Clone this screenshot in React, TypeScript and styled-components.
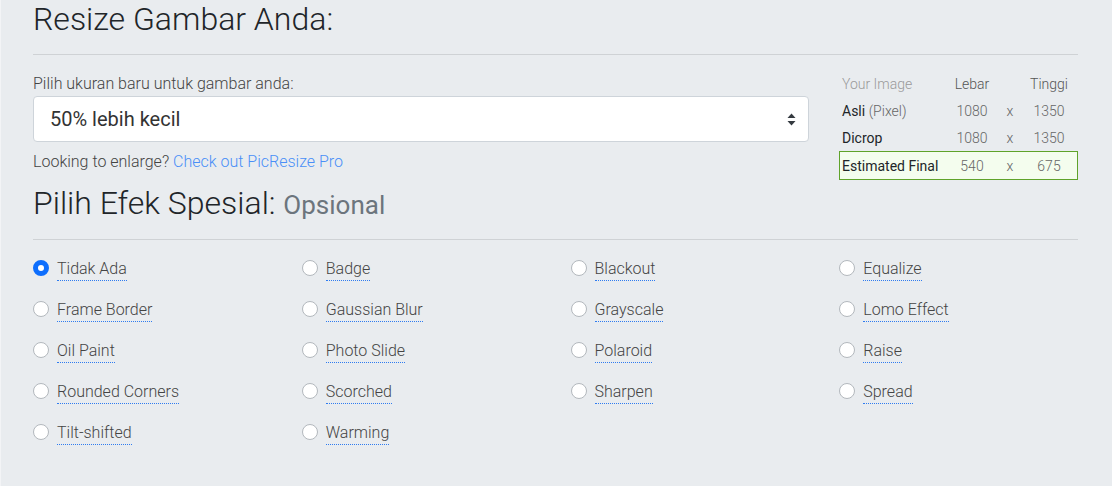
import React from 'react';
import styled, { createGlobalStyle } from 'styled-components';

const GlobalStyle = createGlobalStyle`
  html, body {
    margin: 0;
    padding: 0;
    background-color: #e9ecef;
  }
  body {
    font-family: Roboto, "Liberation Sans", Arial, sans-serif;
    color: #212529;
  }
`;

const Page = styled.div`
  min-height: 486px;
  border-left: 1px solid #f3f4f6;
  box-sizing: border-box;
  padding-left: 32px;
`;

const Container = styled.div`
  width: 1045px;
`;

const Title = styled.h1`
  margin: 0;
  font-size: 32px;
  font-weight: 300;
  line-height: 38px;
  color: #212529;
`;

const Divider = styled.hr`
  border: 0;
  border-top: 1px solid #cfd2d5;
  margin: 16px 0 19px;
`;

const Row = styled.div`
  display: grid;
  grid-template-columns: 776px 1fr;
  column-gap: 30px;
`;

const FieldLabel = styled.div`
  font-size: 16px;
  font-weight: 300;
  line-height: 19px;
  color: #444;
  margin-bottom: 3px;
`;

const SelectBox = styled.div`
  height: 46px;
  box-sizing: border-box;
  background: #fff;
  border: 1px solid #ced4da;
  border-radius: 4px;
  display: flex;
  align-items: center;
  justify-content: space-between;
  padding: 0 12px 0 16px;
  font-size: 20px;
  font-weight: 400;
  color: #333;
`;

const Hint = styled.div`
  margin-top: 10px;
  font-size: 16px;
  font-weight: 300;
  line-height: 19px;
  color: #444;

  a {
    color: #4a8ff7;
    text-decoration: none;
  }
`;

const SizeTable = styled.table`
  width: 100%;
  border-collapse: collapse;
  margin-top: -3px;
  font-size: 14px;
  font-weight: 400;

  th {
    font-weight: 300;
    color: #555;
    height: 26px;
    text-align: center;
    padding: 0;
  }
  th:first-child {
    color: #9a9a9a;
    text-align: left;
    padding-left: 3px;
  }
  td {
    height: 27px;
    text-align: center;
    color: #666;
    font-weight: 300;
    padding: 0;
  }
  td:first-child {
    text-align: left;
    padding-left: 3px;
    color: #212529;
    font-weight: 400;
  }
`;

const Muted = styled.span`
  color: #666;
  font-weight: 300;
`;

const FinalRow = styled.tr`
  background: #f4fdee;
  outline: 1px solid #5fa32a;
  outline-offset: -1px;

  td {
    height: 29px;
  }
`;

const Subtitle = styled.h2`
  margin: 5px 0 0;
  font-size: 32px;
  font-weight: 300;
  line-height: 36px;
  color: #212529;
`;

const Optional = styled.span`
  font-size: 26px;
  font-weight: 400;
  color: #6c757d;
`;

const EffectGrid = styled.div`
  display: grid;
  grid-template-columns: repeat(4, 268.75px);
  grid-auto-rows: 41px;
  margin-top: -12px;
  margin-right: -30px;
`;

const Option = styled.label`
  display: flex;
  align-items: center;
  gap: 8px;
  height: 41px;
  cursor: pointer;
`;

const Radio = styled.span<{ $checked?: boolean }>`
  width: 16px;
  height: 16px;
  box-sizing: border-box;
  border-radius: 50%;
  flex-shrink: 0;
  background: #fff;
  border: ${(p) => (p.$checked ? '5px solid #0d6efd' : '1px solid #b3b8bd')};
`;

const OptionText = styled.span`
  font-size: 16px;
  font-weight: 300;
  color: #444;
  line-height: 20px;
  padding-bottom: 1px;
  border-bottom: 1px dotted #2f7cf0;
  margin-top: 4px;
`;

const effects = [
  'Tidak Ada', 'Badge', 'Blackout', 'Equalize',
  'Frame Border', 'Gaussian Blur', 'Grayscale', 'Lomo Effect',
  'Oil Paint', 'Photo Slide', 'Polaroid', 'Raise',
  'Rounded Corners', 'Scorched', 'Sharpen', 'Spread',
  'Tilt-shifted', 'Warming',
];

const SortArrows = () => (
  <svg width="9" height="13" viewBox="0 0 9 13">
    <path d="M4.5 0.5 L8.5 5 H0.5 Z" fill="#343a40" />
    <path d="M4.5 12.5 L8.5 8 H0.5 Z" fill="#343a40" />
  </svg>
);

const App: React.FC = () => {
  const [selected, setSelected] = React.useState('Tidak Ada');

  return (
    <Page>
      <GlobalStyle />
      <Container>
        <Title>Resize Gambar Anda:</Title>
        <Divider />

        <Row>
          <div>
            <FieldLabel>Pilih ukuran baru untuk gambar anda:</FieldLabel>
            <SelectBox>
              <span>50% lebih kecil</span>
              <SortArrows />
            </SelectBox>
            <Hint>
              Looking to enlarge? <a href="#">Check out PicResize Pro</a>
            </Hint>
          </div>

          <SizeTable>
            <colgroup>
              <col />
              <col style={{ width: 56 }} />
              <col style={{ width: 20 }} />
              <col style={{ width: 58 }} />
            </colgroup>
            <thead>
              <tr>
                <th>Your Image</th>
                <th>Lebar</th>
                <th></th>
                <th>Tinggi</th>
              </tr>
            </thead>
            <tbody>
              <tr>
                <td>Asli <Muted>(Pixel)</Muted></td>
                <td>1080</td>
                <td>x</td>
                <td>1350</td>
              </tr>
              <tr>
                <td>Dicrop</td>
                <td>1080</td>
                <td>x</td>
                <td>1350</td>
              </tr>
              <FinalRow>
                <td>Estimated Final</td>
                <td>540</td>
                <td>x</td>
                <td>675</td>
              </FinalRow>
            </tbody>
          </SizeTable>
        </Row>

        <Subtitle>
          Pilih Efek Spesial: <Optional>Opsional</Optional>
        </Subtitle>
        <Divider />

        <EffectGrid>
          {effects.map((name) => (
            <Option key={name} onClick={() => setSelected(name)}>
              <Radio $checked={selected === name} />
              <OptionText>{name}</OptionText>
            </Option>
          ))}
        </EffectGrid>
      </Container>
    </Page>
  );
};

export default App;
